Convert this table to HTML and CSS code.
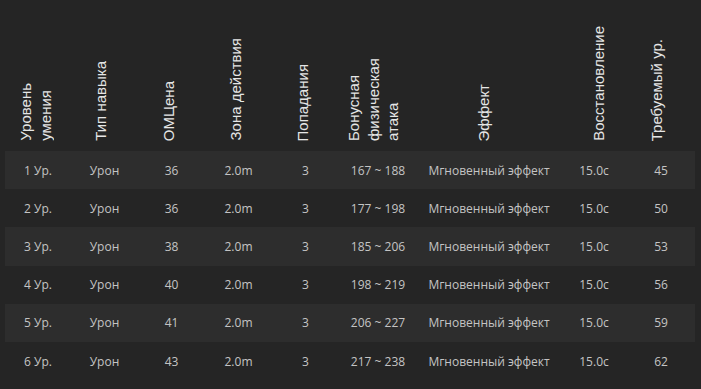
FILE: index.html
```html
<!DOCTYPE html>
<html lang="ru">
<head>
<meta charset="utf-8">
<title>Таблица умения</title>
<link rel="stylesheet" href="styles.css">
</head>
<body>
<div class="table">
  <div class="row head">
    <div class="th"><span class="vt">Уровень<br>умения</span></div>
    <div class="th"><span class="vt">Тип навыка</span></div>
    <div class="th"><span class="vt">ОМЦена</span></div>
    <div class="th"><span class="vt">Зона действия</span></div>
    <div class="th"><span class="vt">Попадания</span></div>
    <div class="th"><span class="vt">Бонусная<br>физическая<br>атака</span></div>
    <div class="th"><span class="vt">Эффект</span></div>
    <div class="th"><span class="vt">Восстановление</span></div>
    <div class="th"><span class="vt">Требуемый ур.</span></div>
  </div>
  <div class="row odd"><div>1 Ур.</div><div>Урон</div><div>36</div><div>2.0m</div><div>3</div><div>167 ~ 188</div><div>Мгновенный эффект</div><div>15.0c</div><div>45</div></div>
  <div class="row"><div>2 Ур.</div><div>Урон</div><div>36</div><div>2.0m</div><div>3</div><div>177 ~ 198</div><div>Мгновенный эффект</div><div>15.0c</div><div>50</div></div>
  <div class="row odd"><div>3 Ур.</div><div>Урон</div><div>38</div><div>2.0m</div><div>3</div><div>185 ~ 206</div><div>Мгновенный эффект</div><div>15.0c</div><div>53</div></div>
  <div class="row"><div>4 Ур.</div><div>Урон</div><div>40</div><div>2.0m</div><div>3</div><div>198 ~ 219</div><div>Мгновенный эффект</div><div>15.0c</div><div>56</div></div>
  <div class="row odd"><div>5 Ур.</div><div>Урон</div><div>41</div><div>2.0m</div><div>3</div><div>206 ~ 227</div><div>Мгновенный эффект</div><div>15.0c</div><div>59</div></div>
  <div class="row"><div>6 Ур.</div><div>Урон</div><div>43</div><div>2.0m</div><div>3</div><div>217 ~ 238</div><div>Мгновенный эффект</div><div>15.0c</div><div>62</div></div>
</div>
</body>
</html>
```
FILE: styles.css
```css
html, body {
  margin: 0;
  padding: 0;
  background: #252525;
}
body {
  font-family: "Open Sans", "Noto Sans", sans-serif;
}
.table {
  margin-left: 5px;
  width: 690px;
}
.row {
  display: grid;
  grid-template-columns: 66px 67px 67px 67px 67px 78px 144px 66px 68px;
  height: 38.2px;
  align-items: center;
  justify-items: center;
  color: #c4c4c4;
  font-size: 12px;
}
.row.odd {
  background: #2d2d2d;
}
.row.head {
  grid-template-columns: 60px 72px 63px 71px 63px 78px 144px 85px 32px;
  height: 151px;
  align-items: end;
  background: transparent;
}
.th {
  padding-bottom: 10px;
}
.vt {
  display: block;
  writing-mode: vertical-rl;
  transform: rotate(180deg);
  font-family: "Liberation Sans", Arial, sans-serif;
  font-size: 15px;
  line-height: 19.5px;
  color: #e6e6e6;
  white-space: nowrap;
}
```
